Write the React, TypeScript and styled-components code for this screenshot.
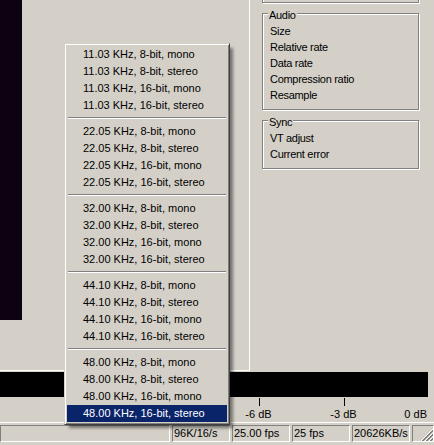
import styled, { createGlobalStyle } from "styled-components";

const rates = ["11.03", "22.05", "32.00", "44.10", "48.00"];
const formats = ["8-bit, mono", "8-bit, stereo", "16-bit, mono", "16-bit, stereo"];

const scaleMarks = [
  { label: "-6 dB", x: 259, tick: true, align: "center" },
  { label: "-3 dB", x: 344, tick: true, align: "center" },
  { label: "0 dB", x: 428, tick: false, align: "end" },
];

const statusPanels = [
  { text: "", width: 170 },
  { text: "96K/16/s", width: 58 },
  { text: "25.00 fps", width: 58 },
  { text: "25 fps", width: 58 },
  { text: "20626KB/s", width: 58 },
];

const App = () => {
  return (
    <>
      <GlobalStyle />
      <Window>
        <Main>
          <VideoPane>
            <VideoFrame />
          </VideoPane>
          <SidePanel>
            <CutGroup />
            <GroupBox>
              <Legend>Audio</Legend>
              <Field>Size</Field>
              <Field>Relative rate</Field>
              <Field>Data rate</Field>
              <Field>Compression ratio</Field>
              <Field>Resample</Field>
            </GroupBox>
            <GroupBox>
              <Legend>Sync</Legend>
              <Field>VT adjust</Field>
              <Field>Current error</Field>
            </GroupBox>
          </SidePanel>
        </Main>

        <MeterBar />
        <Scale>
          {scaleMarks.map((m) => (
            <span key={m.label}>
              {m.tick && <Tick style={{ left: m.x }} />}
              <ScaleLabel $align={m.align} style={{ left: m.align === "end" ? m.x - 1 : m.x - 0.5 }}>
                {m.label}
              </ScaleLabel>
            </span>
          ))}
        </Scale>

        <StatusBar>
          {statusPanels.map((p, i) => (
            <StatusPanel key={i} $w={p.width}>
              {p.text}
            </StatusPanel>
          ))}
          <GripPanel>
            <svg width="12" height="12" viewBox="0 0 12 12" shapeRendering="crispEdges">
              {[0, 4, 8].map((o) => (
                <g key={o}>
                  <line x1={o} y1={12} x2={12} y2={o} stroke="#ffffff" />
                  <line x1={o + 1} y1={12} x2={12} y2={o + 1} stroke="#808080" />
                  <line x1={o + 2} y1={12} x2={12} y2={o + 2} stroke="#808080" />
                </g>
              ))}
            </svg>
          </GripPanel>
        </StatusBar>

        <PopupMenu>
          {rates.map((rate, gi) => (
            <div key={rate}>
              {gi > 0 && <Separator />}
              {formats.map((f, fi) => (
                <MenuItem key={f} $active={gi === rates.length - 1 && fi === formats.length - 1}>
                  {rate} KHz, {f}
                </MenuItem>
              ))}
            </div>
          ))}
        </PopupMenu>
      </Window>
    </>
  );
};

export default App;

const GlobalStyle = createGlobalStyle`
  html, body {
    margin: 0;
    padding: 0;
    background: #d4d0c8;
    overflow: hidden;
  }
`;

const Window = styled.div`
  position: relative;
  width: 434px;
  height: 445px;
  overflow: hidden;
  background: #d4d0c8;
  font-family: "Liberation Sans", Arial, sans-serif;
  font-size: 11px;
  color: #000;
`;

const Main = styled.div`
  display: flex;
  height: 371px;
`;

const VideoPane = styled.div`
  width: 250px;
  box-sizing: border-box;
  border-right: 1px solid #ffffff;
  border-bottom: 1px solid #ffffff;
`;

const VideoFrame = styled.div`
  width: 22px;
  height: 320px;
  background: #0d0211;
`;

const SidePanel = styled.div`
  flex: 1;
  display: flex;
  flex-direction: column;
  padding: 0 15px 0 12px;
  overflow: hidden;
`;

const GroupBox = styled.div`
  margin-top: 10px;
  border: 1px solid #808080;
  box-shadow: inset 1px 1px 0 #ffffff, 1px 1px 0 #ffffff;
  padding: 0 0 6px 7px;
  letter-spacing: -0.3px;
`;

const CutGroup = styled(GroupBox)`
  height: 20px;
  margin-top: -17px;
  box-sizing: border-box;
  padding: 0;
`;

const Legend = styled.div`
  width: fit-content;
  margin: -7px 0 0 -2px;
  padding: 0 1px;
  line-height: 16px;
  background: #d4d0c8;
`;

const Field = styled.div`
  line-height: 16px;
  white-space: nowrap;
`;

const MeterBar = styled.div`
  margin-top: 1px;
  width: 428px;
  height: 25px;
  background: #000;
`;

const Scale = styled.div`
  position: relative;
  height: 25px;
`;

const Tick = styled.div`
  position: absolute;
  top: 1px;
  width: 1px;
  height: 8px;
  background: #000;
`;

const ScaleLabel = styled.div<{ $align: string }>`
  position: absolute;
  top: 11px;
  line-height: 13px;
  white-space: nowrap;
  transform: ${(p) => (p.$align === "end" ? "translateX(-100%)" : "translateX(-50%)")};
`;

const StatusBar = styled.div`
  display: flex;
  gap: 2px;
  border-top: 1px solid #ffffff;
  padding: 2px 0 3px;
`;

const StatusPanel = styled.div<{ $w: number }>`
  width: ${(p) => p.$w}px;
  height: 17px;
  box-sizing: border-box;
  border: 1px solid;
  border-color: #808080 #ffffff #ffffff #808080;
  padding: 0 1px;
  line-height: 15px;
  white-space: nowrap;
  overflow: hidden;
`;

const GripPanel = styled.div`
  flex: 1;
  height: 17px;
  box-sizing: border-box;
  border: 1px solid;
  border-color: #808080 #ffffff #ffffff #808080;
  display: flex;
  align-items: flex-end;
  justify-content: flex-end;
`;

const PopupMenu = styled.div`
  position: absolute;
  top: 43px;
  left: 64px;
  width: 166px;
  box-sizing: border-box;
  padding: 2px;
  background: #d4d0c8;
  border: 1px solid;
  border-color: #d4d0c8 #404040 #404040 #d4d0c8;
  box-shadow: inset 1px 1px 0 #ffffff, inset -1px -1px 0 #808080,
    4px 4px 3px -1px rgba(0, 0, 0, 0.45);
`;

const MenuItem = styled.div<{ $active?: boolean }>`
  height: 17px;
  line-height: 17px;
  padding-left: 16px;
  white-space: nowrap;
  background: ${(p) => (p.$active ? "#0a246a" : "transparent")};
  color: ${(p) => (p.$active ? "#ffffff" : "#000000")};
`;

const Separator = styled.div`
  height: 9px;
  box-sizing: border-box;
  padding-top: 3px;
  margin: 0 1px;

  &::after {
    content: "";
    display: block;
    height: 1px;
    background: #808080;
    border-bottom: 1px solid #ffffff;
  }
`;
